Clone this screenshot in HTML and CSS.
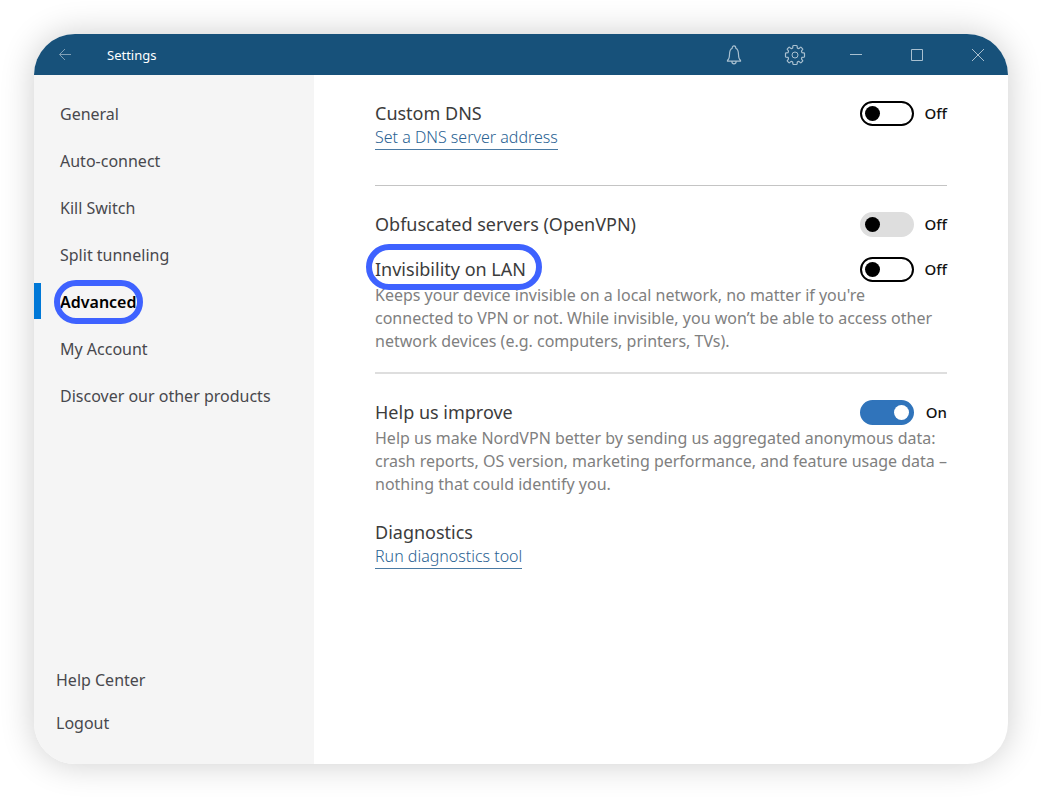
FILE: index.html
```
<!DOCTYPE html>
<html lang="en">
<head>
    <meta charset="UTF-8">
    <meta name="viewport" content="width=device-width, initial-scale=1.0">
    <title>Settings</title>
    <link rel="stylesheet" href="styles.css">
</head>
<body>
    <div class="window">
        <header class="titlebar">
            <button class="bar-button" type="button" aria-label="Back">
                <svg width="14" height="14" viewBox="0 0 14 14"><path d="M13 6.5H1.5M7 1L1.5 6.5L7 12"/></svg>
            </button>
            <h1>Settings</h1>
            <div class="bar-actions">
                <button class="bar-button bright" type="button" aria-label="Notifications">
                    <svg width="20" height="22" viewBox="0 0 20 22"><path d="M3.5 17.2V16.3C5 15.4 5.4 13.8 5.5 10.5C5.6 6.8 6.4 4.9 8.2 4.2C8.2 1 11.8 1 11.8 4.2C13.6 4.9 14.4 6.8 14.5 10.5C14.6 13.8 15 15.4 16.5 16.3V17.2ZM7.8 17.4C8 20.6 12 20.6 12.2 17.4" stroke-width="1.2"/></svg>
                </button>
                <button class="bar-button bright" type="button" aria-label="Preferences">
                    <svg width="22" height="22" viewBox="0 0 22 22"><circle cx="11" cy="11" r="3"/><path d="M8.9 2Q9 1.5 9.5 1.5H12.5Q13 1.5 13.1 2L13.3 3.9Q14.2 4.9 15.4 4.3L16.3 3.4Q16.8 3 17.2 3.4L18.6 4.8Q19 5.2 18.6 5.7L17.7 6.6Q17.1 7.8 18.1 8.7L20 8.9Q20.5 9 20.5 9.5V12.5Q20.5 13 20 13.1L18.1 13.3Q17.1 14.2 17.7 15.4L18.6 16.3Q19 16.8 18.6 17.2L17.2 18.6Q16.8 19 16.3 18.6L15.4 17.7Q14.2 17.1 13.3 18.1L13.1 20Q13 20.5 12.5 20.5H9.5Q9 20.5 8.9 20L8.7 18.1Q7.8 17.1 6.6 17.7L5.7 18.6Q5.2 19 4.8 18.6L3.4 17.2Q3 16.8 3.4 16.3L4.3 15.4Q4.9 14.2 3.9 13.3L2 13.1Q1.5 13 1.5 12.5V9.5Q1.5 9 2 8.9L3.9 8.7Q4.9 7.8 4.3 6.6L3.4 5.7Q3 5.2 3.4 4.8L4.8 3.4Q5.2 3 5.7 3.4L6.6 4.3Q7.8 4.9 8.7 3.9Z" stroke-width="1.2"/></svg>
                </button>
                <button class="bar-button bright" type="button" aria-label="Minimize">
                    <svg width="14" height="14" viewBox="0 0 14 14"><path d="M1 6.5H13"/></svg>
                </button>
                <button class="bar-button bright" type="button" aria-label="Maximize">
                    <svg width="14" height="14" viewBox="0 0 14 14"><path d="M1.5 1.5H12.5V12.5H1.5Z"/></svg>
                </button>
                <button class="bar-button bright" type="button" aria-label="Close">
                    <svg width="14" height="14" viewBox="0 0 14 14"><path d="M1 1L13 13M13 1L1 13"/></svg>
                </button>
            </div>
        </header>

        <div class="body">
            <nav class="sidebar">
                <ul class="menu">
                    <li><a href="#general">General</a></li>
                    <li><a href="#auto-connect">Auto-connect</a></li>
                    <li><a href="#kill-switch">Kill Switch</a></li>
                    <li><a href="#split-tunneling">Split tunneling</a></li>
                    <li class="active"><a href="#advanced"><span class="marked">Advanced</span></a></li>
                    <li><a href="#account">My Account</a></li>
                    <li><a href="#products">Discover our other products</a></li>
                </ul>
                <ul class="menu-footer">
                    <li><a href="#help">Help Center</a></li>
                    <li><a href="#logout">Logout</a></li>
                </ul>
            </nav>

            <main class="content">
                <section class="group">
                    <div class="setting">
                        <label class="name" for="custom-dns">Custom DNS</label>
                        <div class="switch">
                            <input type="checkbox" id="custom-dns">
                            <span>Off</span>
                        </div>
                    </div>
                    <a class="link" href="#dns">Set a DNS server address</a>
                </section>

                <section class="group servers">
                    <div class="setting">
                        <label class="name" for="obfuscated">Obfuscated servers (OpenVPN)</label>
                        <div class="switch">
                            <input type="checkbox" id="obfuscated" class="muted">
                            <span>Off</span>
                        </div>
                    </div>
                    <div class="setting spaced">
                        <label class="name marked wide" for="invisibility">Invisibility on LAN</label>
                        <div class="switch">
                            <input type="checkbox" id="invisibility">
                            <span>Off</span>
                        </div>
                    </div>
                    <p>Keeps your device invisible on a local network, no matter if you're<br>connected to VPN or not. While invisible, you won’t be able to access other network devices (e.g. computers, printers, TVs).</p>
                </section>

                <section class="group">
                    <div class="setting">
                        <label class="name" for="improve">Help us improve</label>
                        <div class="switch">
                            <input type="checkbox" id="improve" checked>
                            <span>On</span>
                        </div>
                    </div>
                    <p>Help us make NordVPN better by sending us aggregated anonymous data: crash reports, OS version, marketing performance, and feature usage data – nothing that could identify you.</p>
                    <div class="setting diagnostics">
                        <h2 class="name">Diagnostics</h2>
                    </div>
                    <a class="link" href="#diagnostics">Run diagnostics tool</a>
                </section>
            </main>
        </div>
    </div>
</body>
</html>
```
FILE: styles.css
```
* {
    box-sizing: border-box;
}

body {
    margin: 0;
    min-height: 100vh;
    padding: 34px;
    display: flex;
    background-color: #fff;
    color: #3c3c3c;
    font-family: "Noto Sans", "Open Sans", sans-serif;
    font-size: 16px;
}

h1, h2, p, ul {
    margin: 0;
    padding: 0;
    font-weight: normal;
}

ul {
    list-style: none;
}

a {
    color: inherit;
    text-decoration: none;
}

.window {
    flex: 1;
    display: flex;
    flex-direction: column;
    border-radius: 41px;
    overflow: hidden;
    background-color: #fff;
    box-shadow: 0 0 34px rgba(0, 0, 0, 0.2);
}

/* title bar */
.titlebar {
    display: flex;
    align-items: center;
    height: 41px;
    padding: 0 16px;
    background-color: #17517a;
    color: #fff;
}

.titlebar h1 {
    margin-left: 28px;
    font-size: 13px;
}

.bar-actions {
    display: flex;
    gap: 32px;
    margin-left: auto;
}

.bar-button {
    display: flex;
    align-items: center;
    justify-content: center;
    width: 29px;
    height: 32px;
    padding: 0;
    border: none;
    background: none;
    color: #7f9fb6;
    cursor: pointer;
}

.bar-button.bright {
    color: #a9c0d0;
}

.bar-button svg {
    fill: none;
    stroke: currentColor;
    stroke-width: 1;
}

.body {
    flex: 1;
    display: flex;
}

/* sidebar */
.sidebar {
    display: flex;
    flex-direction: column;
    justify-content: space-between;
    width: 280px;
    padding: 15px 0 20px;
    background-color: #f5f5f5;
    color: #48484d;
}

.menu a {
    display: flex;
    align-items: center;
    height: 47px;
    padding-left: 26px;
}

.menu .active {
    position: relative;
    color: #000;
    font-weight: 600;
}

.menu .active::before {
    content: "";
    position: absolute;
    left: 0;
    top: 5px;
    width: 7px;
    height: 36px;
    background-color: #0078d7;
}

.menu-footer a {
    display: flex;
    align-items: center;
    height: 43px;
    padding-left: 22px;
}

/* blue ring around a text */
.marked {
    position: relative;
}

.marked::after {
    content: "";
    position: absolute;
    inset: -11px -6px;
    border: 6px solid #3e62ff;
    border-radius: 23px;
}

.marked.wide::after {
    inset: -12px -16px -8px -9px;
}

/* settings */
.content {
    flex: 1;
    padding: 0 61px;
}

.group {
    padding: 25px 0 35px;
}

.group + .group {
    border-top: 2px solid #dedede;
}

.group.servers {
    border-top: 1px solid #c4c4c4;
    padding-bottom: 19px;
}

.setting {
    display: flex;
    align-items: center;
    justify-content: space-between;
    height: 26px;
}

.setting.spaced {
    margin-top: 19px;
}

.setting.diagnostics {
    margin-top: 23px;
}

.name {
    font-size: 18px;
    line-height: 26px;
}

.group p {
    margin-top: 2px;
    color: #808080;
    line-height: 23px;
}

.link {
    display: inline-block;
    border-bottom: 1px solid #4a7aa3;
    color: #2a6293;
    font-weight: 300;
    line-height: 23px;
}

.switch {
    display: flex;
    align-items: center;
    color: #111;
    font-size: 15px;
    font-weight: 500;
}

.switch span {
    width: 33px;
    text-align: right;
}

.switch input {
    appearance: none;
    display: flex;
    align-items: center;
    width: 54px;
    height: 25px;
    margin: 0;
    padding: 0 3px;
    border: 2px solid #000;
    border-radius: 13px;
    background-color: #fff;
    cursor: pointer;
}

.switch input::before {
    content: "";
    width: 15px;
    height: 15px;
    border-radius: 50%;
    background-color: #000;
}

.switch input.muted {
    border-color: #dedede;
    background-color: #dedede;
}

.switch input:checked {
    justify-content: flex-end;
    border-color: #3074bb;
    background-color: #3074bb;
}

.switch input:checked::before {
    background-color: #fff;
}
```
